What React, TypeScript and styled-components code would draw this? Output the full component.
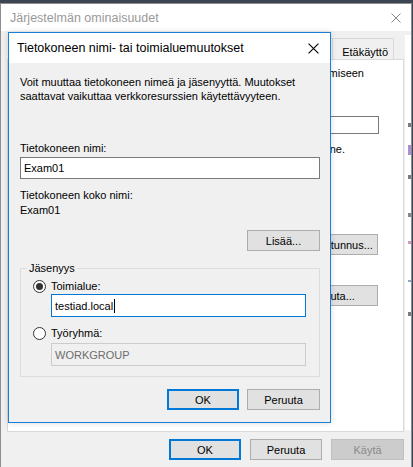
import styled, { createGlobalStyle } from "styled-components"

const GlobalStyle = createGlobalStyle`
  *, *::before, *::after { box-sizing: border-box; }
  html, body { margin: 0; padding: 0; }
  body {
    width: 413px;
    height: 467px;
    overflow: hidden;
    background: #3b4652;
    font-family: "Liberation Sans", Arial, sans-serif;
    font-size: 11px;
    color: #000;
  }
`

const Desktop = styled.div`
  position: relative;
  width: 413px;
  height: 467px;
  overflow: hidden;
  background: #3b4652;
`

/* ---------- parent window: Järjestelmän ominaisuudet ---------- */

const Window = styled.div`
  position: absolute;
  left: 0;
  top: 3px;
  width: 412px;
  height: 480px;
  border: 1px solid #8e8e8e;
  background: #f0f0f0;
  display: flex;
  flex-direction: column;
`

const TitleBar = styled.div<{ $height: number; $color: string }>`
  height: ${p => p.$height}px;
  flex-shrink: 0;
  background: #fff;
  display: flex;
  align-items: center;
  justify-content: space-between;
  font-size: 12.5px;
  color: ${p => p.$color};
  white-space: nowrap;
`

const TitleText = styled.span<{ $left: number }>`
  padding-left: ${p => p.$left}px;
`

const CloseBox = styled.span<{ $right: number }>`
  display: flex;
  padding-right: ${p => p.$right}px;
`

const WindowBody = styled.div`
  display: flex;
  flex: 1;
`

const MainColumn = styled.div`
  width: 403px;
  padding: 7px 0 0 6px;
  display: flex;
  flex-direction: column;
`

const TabStrip = styled.div`
  height: 21px;
  display: flex;
  justify-content: flex-end;
  padding-right: 10px;
  overflow: hidden;
`

const Tab = styled.div`
  height: 21px;
  padding: 6px 5px 0 9px;
  margin-left: -1px;
  border: 1px solid #d9d9d9;
  border-bottom: none;
  background: #f0f0f0;
  line-height: 14px;
  white-space: nowrap;
  flex-shrink: 0;
`

const TabPanel = styled.div`
  height: 373px;
  background: #fff;
  border: 1px solid #d9d9d9;
  display: flex;
  flex-direction: column;
  align-items: flex-end;
  padding-top: 6px;
  overflow: hidden;
`

const PanelItem = styled.div<{ $right: number; $top: number }>`
  margin-right: ${p => p.$right}px;
  margin-top: ${p => p.$top}px;
  white-space: nowrap;
  line-height: 14px;
`

const PanelField = styled.div`
  width: 240px;
  height: 18px;
  border: 1px solid #7a7a7a;
  background: #fff;
`

const SideStrip = styled.div`
  width: 6px;
  height: 395px;
  margin: 4px 0 0 1px;
  background: #fff;
  display: flex;
  flex-direction: column;
  align-items: flex-end;
`

const StripMark = styled.span<{ $top: number; $color: string; $h: number }>`
  width: 3px;
  height: ${p => p.$h}px;
  margin-top: ${p => p.$top}px;
  background: ${p => p.$color};
  opacity: 0.7;
`

/* ---------- shared controls ---------- */

const Button = styled.button<{ $width: number; $default?: boolean }>`
  width: ${p => p.$width}px;
  height: 21px;
  padding: 0;
  font-family: inherit;
  font-size: 11px;
  color: ${p => (p.disabled ? "#8a8a8a" : "#000")};
  background: ${p => (p.disabled ? "#cccccc" : "#e1e1e1")};
  border: ${p => (p.$default ? "2px solid #0078d7" : p.disabled ? "1px solid #bfbfbf" : "1px solid #adadad")};
  flex-shrink: 0;
`

const ButtonRow = styled.div<{ $gap: number; $top: number }>`
  display: flex;
  justify-content: flex-end;
  gap: ${p => p.$gap}px;
  margin-top: ${p => p.$top}px;
`

const TextField = styled.div<{ $focused?: boolean; $disabled?: boolean; $height: number; $top?: number }>`
  height: ${p => p.$height}px;
  margin-top: ${p => p.$top ?? 0}px;
  border: 1px solid ${p => (p.$focused ? "#0078d7" : p.$disabled ? "#cccccc" : "#7a7a7a")};
  background: ${p => (p.$disabled ? "#f0f0f0" : "#fff")};
  color: ${p => (p.$disabled ? "#6d6d6d" : "#000")};
  display: flex;
  align-items: center;
  padding-left: 3px;
  font-size: 11px;
`

const Caret = styled.span`
  width: 1px;
  height: 14px;
  margin-left: 1px;
  background: #000;
`

/* ---------- child dialog ---------- */

const Dialog = styled.div`
  position: absolute;
  z-index: 2;
  left: 8px;
  top: 32px;
  width: 323px;
  height: 391px;
  border: 1px solid #1a7fd4;
  background: #f0f0f0;
  display: flex;
  flex-direction: column;
  box-shadow: 0 0 6px rgba(0, 0, 0, 0.15);
`

const DialogBody = styled.div`
  flex: 1;
  padding: 12px 10px 0 11px;
  display: flex;
  flex-direction: column;
`

const Text = styled.div<{ $top?: number }>`
  margin-top: ${p => p.$top ?? 0}px;
  line-height: 14px;
  white-space: nowrap;
`

const RightButton = styled.div<{ $top: number }>`
  align-self: flex-end;
  margin-top: ${p => p.$top}px;
  display: flex;
`

const GroupBox = styled.fieldset`
  margin: 10px 0 0 0;
  padding: 0;
  min-width: 0;
  border: 1px solid #dcdcdc;
`

const GroupLegend = styled.legend`
  margin-left: 6px;
  padding: 0 2px;
  line-height: 14px;
`

const GroupContent = styled.div`
  padding: 4px 13px 10px 12px;
  display: flex;
  flex-direction: column;
`

const RadioRow = styled.div<{ $top: number }>`
  margin-top: ${p => p.$top}px;
  height: 14px;
  display: flex;
  align-items: center;
  gap: 5px;
`

const RadioCircle = styled.span<{ $checked?: boolean }>`
  width: 13px;
  height: 13px;
  border-radius: 50%;
  border: 1px solid #333;
  background: #fff;
  display: flex;
  align-items: center;
  justify-content: center;
  &::after {
    content: "";
    width: 7px;
    height: 7px;
    border-radius: 50%;
    background: ${p => (p.$checked ? "#333" : "transparent")};
  }
`

const Indented = styled.div<{ $top: number }>`
  margin: ${p => p.$top}px 0 0 18px;
`

function Cross({ color, size }: { color: string; size: number }) {
  return (
    <svg width={size} height={size} viewBox="0 0 10 10">
      <path d="M0.5 0.5 L9.5 9.5 M9.5 0.5 L0.5 9.5" stroke={color} strokeWidth="1" fill="none" />
    </svg>
  )
}

const tabs = ["Järjestelmän suojaus", "Etäkäyttö"]

export default function App() {
  return (
    <Desktop>
      <GlobalStyle />
      <Window>
        <TitleBar $height={27} $color="#999">
          <TitleText $left={9}>Järjestelmän ominaisuudet</TitleText>
          <CloseBox $right={10}>
            <Cross color="#888" size={10} />
          </CloseBox>
        </TitleBar>
        <WindowBody>
          <MainColumn>
            <TabStrip>
              {tabs.map(t => (
                <Tab key={t}>{t}</Tab>
              ))}
            </TabStrip>
            <TabPanel>
              <PanelItem $right={39} $top={0}>
                tietokoneen tunnistamiseen
              </PanelItem>
              <PanelItem $right={24} $top={36}>
                <PanelField />
              </PanelItem>
              <PanelItem $right={58} $top={8}>
                Keittiön tietokone.
              </PanelItem>
              <PanelItem $right={25} $top={78}>
                <Button $width={86}>Verkkotunnus...</Button>
              </PanelItem>
              <PanelItem $right={25} $top={30}>
                <Button $width={86}>Muuta...</Button>
              </PanelItem>
            </TabPanel>
            <ButtonRow $gap={9} $top={7}>
              <Button $width={72} $default>OK</Button>
              <Button $width={72}>Peruuta</Button>
              <Button $width={73} disabled>Käytä</Button>
            </ButtonRow>
          </MainColumn>
          <SideStrip>
            <StripMark $top={88} $color="#444" $h={4} />
            <StripMark $top={18} $color="#8a5fc9" $h={10} />
            <StripMark $top={20} $color="#444" $h={4} />
            <StripMark $top={34} $color="#555" $h={4} />
            <StripMark $top={24} $color="#c86aa8" $h={3} />
            <StripMark $top={36} $color="#5a7fc0" $h={2} />
            <StripMark $top={30} $color="#444" $h={4} />
          </SideStrip>
        </WindowBody>
      </Window>

      <Dialog>
        <TitleBar $height={30} $color="#000">
          <TitleText $left={8}>Tietokoneen nimi- tai toimialuemuutokset</TitleText>
          <CloseBox $right={11}>
            <Cross color="#000" size={11} />
          </CloseBox>
        </TitleBar>
        <DialogBody>
          <Text>Voit muuttaa tietokoneen nimeä ja jäsenyyttä. Muutokset</Text>
          <Text>saattavat vaikuttaa verkkoresurssien käytettävyyteen.</Text>
          <Text $top={38}>Tietokoneen nimi:</Text>
          <TextField $height={22} $top={2}>Exam01</TextField>
          <Text $top={9}>Tietokoneen koko nimi:</Text>
          <Text $top={1}>Exam01</Text>
          <RightButton $top={13}>
            <Button $width={73}>Lisää...</Button>
          </RightButton>
          <GroupBox>
            <GroupLegend>Jäsenyys</GroupLegend>
            <GroupContent>
              <RadioRow $top={0}>
                <RadioCircle $checked />
                <span>Toimialue:</span>
              </RadioRow>
              <Indented $top={1}>
                <TextField $height={23} $focused>
                  testiad.local
                  <Caret />
                </TextField>
              </Indented>
              <RadioRow $top={9}>
                <RadioCircle />
                <span>Työryhmä:</span>
              </RadioRow>
              <Indented $top={3}>
                <TextField $height={23} $disabled>WORKGROUP</TextField>
              </Indented>
            </GroupContent>
          </GroupBox>
          <ButtonRow $gap={8} $top={12}>
            <Button $width={72} $default>OK</Button>
            <Button $width={73}>Peruuta</Button>
          </ButtonRow>
        </DialogBody>
      </Dialog>
    </Desktop>
  )
}
